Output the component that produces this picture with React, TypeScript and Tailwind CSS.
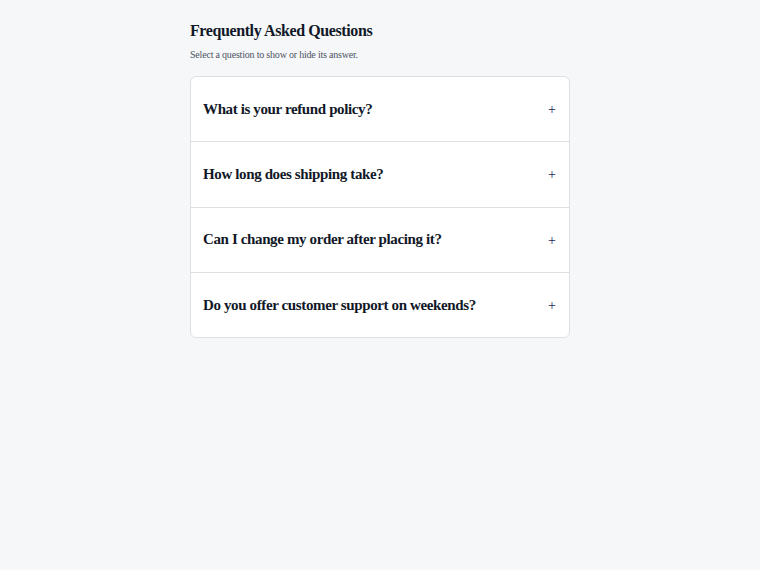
import { useState } from 'react';

const faqs = [
  {
    q: 'What is your refund policy?',
    a: 'You can request a full refund within 30 days of purchase.',
  },
  {
    q: 'How long does shipping take?',
    a: 'Most orders arrive within 3–5 business days.',
  },
  {
    q: 'Can I change my order after placing it?',
    a: 'Yes, as long as it has not shipped yet. Contact us quickly.',
  },
  {
    q: 'Do you offer customer support on weekends?',
    a: 'Our support team is available Saturday and Sunday, 10am–4pm.',
  },
];

export default function App() {
  const [open, setOpen] = useState<number | null>(null);

  return (
    <div className="min-h-screen bg-[#f6f7f9] text-[#111827] font-['Liberation_Serif','Times_New_Roman',serif]">
      <div className="w-[380px] mx-auto pt-[21px]">
        <h1 className="text-[16px] leading-5 font-bold tracking-tight">Frequently Asked Questions</h1>
        <p className="mt-[7px] text-[10px] leading-[14px] tracking-[-0.02em] text-[#4b5563]">
          Select a question to show or hide its answer.
        </p>

        <div className="mt-[14px] bg-white border border-[#dcdfe4] rounded-md">
          {faqs.map((item, i) => (
            <div key={item.q} className={i < faqs.length - 1 ? 'border-b border-[#dcdfe4]' : ''}>
              <button
                onClick={() => setOpen(open === i ? null : i)}
                className="w-full h-[64.3px] pl-3 pr-[13px] flex items-center justify-between text-left cursor-pointer"
              >
                <span className="text-[15px] font-bold tracking-tight">{item.q}</span>
                <span className="pt-[2px] text-[14px] leading-none text-[#1e2a5a]">{open === i ? '−' : '+'}</span>
              </button>
              {open === i && <div className="px-3 pb-4 text-[13px] text-[#4b5563]">{item.a}</div>}
            </div>
          ))}
        </div>
      </div>
    </div>
  );
}
